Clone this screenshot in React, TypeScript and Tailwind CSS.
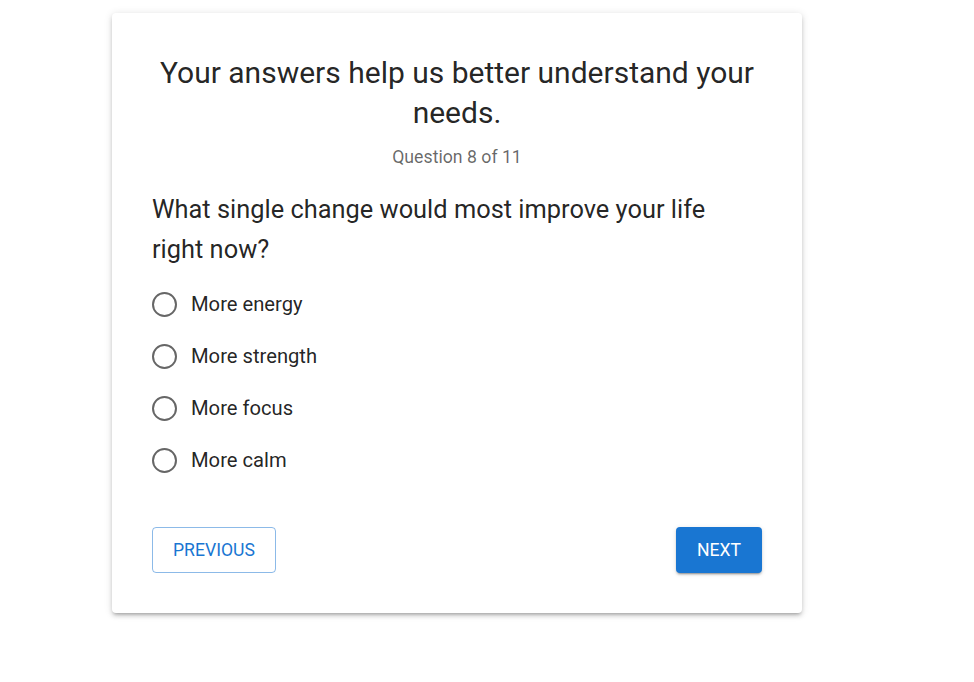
import React, { useState } from 'react';

const OPTIONS = ['More energy', 'More strength', 'More focus', 'More calm'];

const App: React.FC = () => {
  const [selected, setSelected] = useState<string | null>(null);

  return (
    <div className="min-h-screen bg-white font-['Roboto',sans-serif] text-[rgba(0,0,0,0.87)]">
      <div className="ml-[112px] pt-[13px] w-[690px]">
        <div className="bg-white rounded-[4px] px-10 pt-10 pb-10 shadow-[0_3px_3px_-2px_rgba(0,0,0,0.2),0_3px_4px_0_rgba(0,0,0,0.14),0_1px_8px_0_rgba(0,0,0,0.12)]">
          <h1 className="text-center text-[30px] leading-[40px] font-normal">
            Your answers help us better understand your needs.
          </h1>
          <p className="mt-3 text-center text-[17.7px] leading-6 text-[rgba(0,0,0,0.6)]">Question 8 of 11</p>

          <h2 className="mt-5 text-[25.4px] leading-[40px] font-normal pr-12">
            What single change would most improve your life right now?
          </h2>

          <div className="mt-[14px] flex flex-col gap-[10px]">
            {OPTIONS.map((opt) => (
              <label key={opt} className="flex items-center h-[42px] cursor-pointer" onClick={() => setSelected(opt)}>
                <span className="w-[25px] h-[25px] flex items-center justify-center">
                  <svg viewBox="0 0 25 25" className="w-[25px] h-[25px] text-[rgba(0,0,0,0.6)]">
                    <circle cx="12.5" cy="12.5" r="11.5" fill="none" stroke="currentColor" strokeWidth="2" />
                    {selected === opt && <circle cx="12.5" cy="12.5" r="5.5" fill="currentColor" />}
                  </svg>
                </span>
                <span className="ml-[14px] text-[20.2px] leading-6">{opt}</span>
              </label>
            ))}
          </div>

          <div className="mt-[46px] flex items-center justify-between">
            <button className="h-[46px] px-5 rounded-[4px] border border-[rgba(25,118,210,0.5)] text-[#1976d2] text-[17.6px] font-normal uppercase">
              Previous
            </button>
            <button className="h-[46px] px-[21px] rounded-[4px] bg-[#1976d2] text-white text-[17.6px] font-normal uppercase shadow-[0_3px_1px_-2px_rgba(0,0,0,0.2),0_2px_2px_0_rgba(0,0,0,0.14),0_1px_5px_0_rgba(0,0,0,0.12)]">
              Next
            </button>
          </div>
        </div>
      </div>
    </div>
  );
};

export default App;
